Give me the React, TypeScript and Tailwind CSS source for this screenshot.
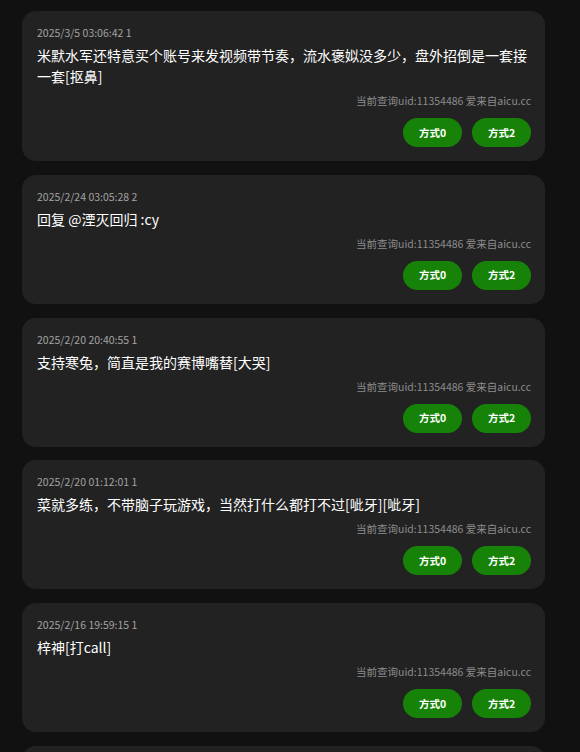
import React from "react";

interface Comment {
	time: string;
	rank: number;
	text: string;
}

const comments: Comment[] = [
	{
		time: "2025/3/5 03:06:42",
		rank: 1,
		text: "米默水军还特意买个账号来发视频带节奏，流水褒姒没多少，盘外招倒是一套接一套[抠鼻]",
	},
	{ time: "2025/2/24 03:05:28", rank: 2, text: "回复 @湮灭回归 :cy" },
	{ time: "2025/2/20 20:40:55", rank: 1, text: "支持寒兔，简直是我的赛博嘴替[大哭]" },
	{
		time: "2025/2/20 01:12:01",
		rank: 1,
		text: "菜就多练，不带脑子玩游戏，当然打什么都打不过[呲牙][呲牙]",
	},
	{ time: "2025/2/16 19:59:15", rank: 1, text: "梓神[打call]" },
	{ time: "2025/2/15 12:30:08", rank: 1, text: "" },
];

const CommentCard: React.FC<{ item: Comment }> = ({ item }) => (
	<div className="rounded-[14px] bg-[#222222] pl-[15px] pr-[14px] pt-[13px] pb-[14px]">
		<div className="text-[10.5px] leading-[18px] text-[#a3a3a3]">
			{item.time} {item.rank}
		</div>
		<div className="mt-[3px] text-[14px] leading-[21px] text-white break-all">
			{item.text}
		</div>
		<div className="mt-[6px] text-right text-[10.5px] leading-[16px] text-[#8c8c8c]">
			当前查询uid:11354486 爱来自aicu.cc
		</div>
		<div className="mt-[9px] flex justify-end gap-[10px]">
			<button className="h-[29px] w-[59px] rounded-full bg-[#168208] text-[10.5px] font-bold text-white">
				方式0
			</button>
			<button className="h-[29px] w-[59px] rounded-full bg-[#168208] text-[10.5px] font-bold text-white">
				方式2
			</button>
		</div>
	</div>
);

export default function App() {
	return (
		<div
			className="h-screen overflow-hidden bg-[#111111] pt-[11px]"
			style={{ fontFamily: '"Noto Sans CJK SC", "Noto Sans", sans-serif' }}
		>
			<div className="ml-[22px] flex w-[523px] flex-col gap-[13.75px]">
				{comments.map((c, i) => (
					<CommentCard key={i} item={c} />
				))}
			</div>
		</div>
	);
}
